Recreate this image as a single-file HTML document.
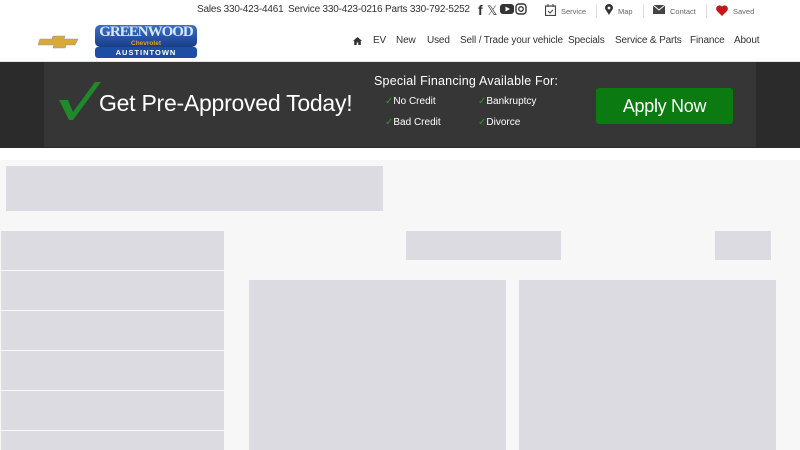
<!DOCTYPE html>
<html><head><meta charset="utf-8"><style>
*{margin:0;padding:0;box-sizing:border-box}
html,body{width:800px;height:450px;overflow:hidden}
body{background:#fff;font-family:"Liberation Sans",sans-serif;position:relative}
.a{position:absolute}
.top{font-size:10px;color:#333;top:4px;white-space:nowrap;letter-spacing:-0.2px}
.util{font-size:7.5px;color:#666;top:7px}
.nav{font-size:10px;color:#333;top:35px;white-space:nowrap;letter-spacing:-0.15px}
.ph{position:absolute;background:#dcdbe1}
</style></head><body>
<div class="a top" style="left:197px">Sales 330-423-4461</div>
<div class="a top" style="left:288px">Service 330-423-0216</div>
<div class="a top" style="left:385px">Parts 330-792-5252</div>
<div class="a" style="left:478px;top:2px;font-size:14px;font-weight:bold;color:#333">f</div>
<div class="a" style="left:487px;top:3px;font-size:13px;color:#333">𝕏</div>
<svg class="a" style="left:500px;top:4px" width="14" height="10"><rect width="14" height="10" rx="3" fill="#333"/><path d="M5.5 2.5L10 5 5.5 7.5z" fill="#fff"/></svg>
<svg class="a" style="left:515px;top:3px" width="12" height="12"><rect x="1" y="1" width="10" height="10" rx="3" fill="none" stroke="#333" stroke-width="1.4"/><circle cx="6" cy="6" r="2.3" fill="none" stroke="#333" stroke-width="1.3"/></svg>
<svg class="a" style="left:545px;top:4px" width="11" height="12"><rect x="0.5" y="2" width="10" height="9.5" fill="none" stroke="#444" stroke-width="1.2"/><path d="M3 0v3M8 0v3M3 7l2 2 3-3" stroke="#444" fill="none"/></svg>
<div class="a util" style="left:561px">Service</div>
<div class="a" style="left:596px;top:4px;width:1px;height:14px;background:#ddd"></div>
<svg class="a" style="left:605px;top:4px" width="8" height="11"><path d="M4 11C1 6 0 5 0 4a4 4 0 018 0c0 1-1 2-4 7z" fill="#333"/><circle cx="4" cy="4" r="1.4" fill="#fff"/></svg>
<div class="a util" style="left:618px">Map</div>
<div class="a" style="left:643px;top:4px;width:1px;height:14px;background:#ddd"></div>
<svg class="a" style="left:653px;top:5px" width="12" height="9"><rect width="12" height="9" fill="#444"/><path d="M0 0l6 5 6-5" stroke="#fff" fill="none"/></svg>
<div class="a util" style="left:670px">Contact</div>
<div class="a" style="left:706px;top:4px;width:1px;height:14px;background:#ddd"></div>
<svg class="a" style="left:716px;top:5px" width="12" height="11"><path d="M6 11L1 6A3 3 0 016 1.5 3 3 0 0111 6z" fill="#c4161c"/></svg>
<div class="a util" style="left:733px">Saved</div>

<svg class="a" style="left:38px;top:35px" width="42" height="14"><path d="M2 4h12l1-3h12l-1 3h14l-3 6H28l-1 3H15l1-3H0z" fill="#d8a93a" stroke="#999" stroke-width=".6"/></svg>
<div class="a" style="left:95px;top:25px;width:102px;height:22px;background:linear-gradient(#3a70c8,#1a3d8a);border-radius:5px;overflow:hidden"><div style="color:#dbe6f5;font-family:'Liberation Serif',serif;font-weight:bold;font-size:15px;line-height:15px;text-align:center;letter-spacing:-1px">GREENWOOD</div><div style="font-size:6.5px;font-weight:bold;color:#e0a020;text-align:center;line-height:7px">Chevrolet</div></div>
<div class="a" style="left:95px;top:47px;width:102px;height:11px;background:#1d4ea3;border-radius:3px;color:#fff;font-size:7.5px;font-weight:bold;text-align:center;line-height:11px;letter-spacing:1px">AUSTINTOWN</div>

<svg class="a" style="left:353px;top:37px" width="9" height="8"><path d="M4.5 0L0 4h1.2v4h2.5V5.5h1.6V8h2.5V4H9z" fill="#333"/></svg>
<div class="a nav" style="left:373px">EV</div>
<div class="a nav" style="left:396px">New</div>
<div class="a nav" style="left:427px">Used</div>
<div class="a nav" style="left:460px">Sell / Trade your vehicle</div>
<div class="a nav" style="left:568px">Specials</div>
<div class="a nav" style="left:615px">Service &amp; Parts</div>
<div class="a nav" style="left:690px">Finance</div>
<div class="a nav" style="left:734px">About</div>
<div class="a" style="left:0;top:61px;width:800px;height:1px;background:#e5e5e5"></div>

<div class="a" style="left:0;top:62px;width:800px;height:86px;background:#2b2b2b"></div>
<div class="a" style="left:44px;top:62px;width:712px;height:85px;background:#363636"></div>
<svg class="a" style="left:57px;top:80px" width="45" height="42"><path d="M2 20l9 0 5 12L38 2h6L16 40h-4z" fill="#1e8a2a"/></svg>
<div class="a" style="left:99px;top:90px;font-size:23px;color:#fff;letter-spacing:-0.25px;white-space:nowrap">Get Pre-Approved Today!</div>
<div class="a" style="left:374px;top:74px;font-size:12.5px;color:#fff;letter-spacing:0.2px;white-space:nowrap">Special Financing Available For:</div>
<div class="a" style="left:385px;top:96px;font-size:10px;color:#fff"><span style="color:#2a9a2a">✓</span>No Credit</div>
<div class="a" style="left:478px;top:96px;font-size:10px;color:#fff"><span style="color:#2a9a2a">✓</span>Bankruptcy</div>
<div class="a" style="left:385px;top:117px;font-size:10px;color:#fff"><span style="color:#2a9a2a">✓</span>Bad Credit</div>
<div class="a" style="left:478px;top:117px;font-size:10px;color:#fff"><span style="color:#2a9a2a">✓</span>Divorce</div>
<div class="a" style="left:596px;top:88px;width:137px;height:36px;background:#0b7a10;border-radius:3px;color:#fff;font-size:18px;text-align:center;line-height:36px;letter-spacing:-0.3px">Apply Now</div>

<div class="a" style="left:0;top:160px;width:800px;height:290px;background:#f7f7f7"></div>
<div class="ph" style="left:6px;top:166px;width:377px;height:45px"></div>
<div class="ph" style="left:1px;top:231px;width:223px;height:39px"></div>
<div class="ph" style="left:1px;top:271px;width:223px;height:39px"></div>
<div class="ph" style="left:1px;top:311px;width:223px;height:39px"></div>
<div class="ph" style="left:1px;top:351px;width:223px;height:39px"></div>
<div class="ph" style="left:1px;top:391px;width:223px;height:39px"></div>
<div class="ph" style="left:1px;top:431px;width:223px;height:19px"></div>
<div class="ph" style="left:406px;top:231px;width:155px;height:29px"></div>
<div class="ph" style="left:715px;top:231px;width:56px;height:29px"></div>
<div class="ph" style="left:249px;top:280px;width:257px;height:170px"></div>
<div class="ph" style="left:519px;top:280px;width:257px;height:170px"></div>
</body></html>
